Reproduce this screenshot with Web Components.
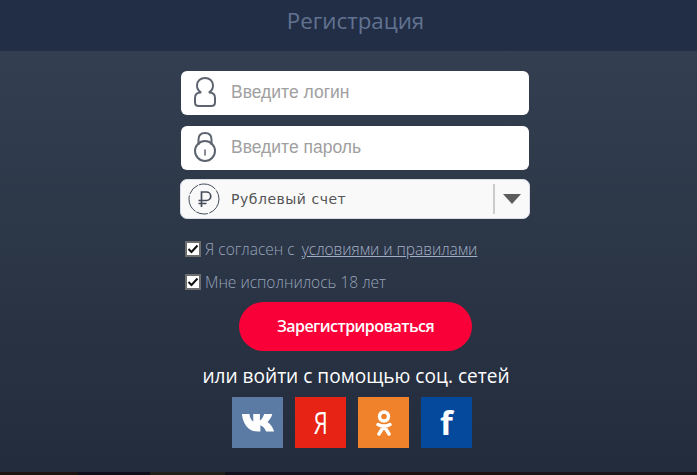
<!DOCTYPE html>
<html lang="ru">
<head>
<meta charset="utf-8">
<title>Регистрация</title>
<style>
  html, body { margin: 0; padding: 0; height: 100%; }
  body { background: #2a3446; font-family: "Open Sans", sans-serif; overflow: hidden; }
</style>
</head>
<body>
<reg-page>
  <reg-header slot="header">Регистрация</reg-header>
  <reg-field icon="user" placeholder="Введите логин"></reg-field>
  <reg-field icon="lock" placeholder="Введите пароль"></reg-field>
  <reg-select>Рублевый счет</reg-select>
  <reg-check first>Я согласен с <a>условиями и правилами</a></reg-check>
  <reg-check>Мне исполнилось 18 лет</reg-check>
  <reg-button>Зарегистрироваться</reg-button>
  <reg-social></reg-social>
</reg-page>

<script>
class RegPage extends HTMLElement {
    connectedCallback() {
        this.attachShadow({ mode: 'open' });
        this.shadowRoot.innerHTML = `
      <style>
        :host {
          display: flex;
          flex-direction: column;
          width: 697px;
          height: 475px;
          overflow: hidden;
        }
        .main {
          flex: 1;
          display: flex;
          flex-direction: column;
          padding: 20px 0 0 180px;
          background: linear-gradient(to bottom, #333f50 0, #232c3d 100%);
        }
        /* the photo behind the form peeks out along the bottom */
        .strip {
          height: 3px;
          background: linear-gradient(to right, #1d1412 0 78px, #0f0f1c 78px 150px, #22201a 150px 225px, #12121e 225px 370px, #1e1210 370px 520px, #1a1418 520px 697px);
        }
      </style>
      <slot name="header"></slot>
      <div class="main"><slot></slot></div>
      <div class="strip"></div>
    `;
    }
}

class RegHeader extends HTMLElement {
    connectedCallback() {
        this.attachShadow({ mode: 'open' });
        this.shadowRoot.innerHTML = `
      <style>
        :host {
          display: block;
          height: 51px;
          padding: 3px 0 0 14px;
          box-sizing: border-box;
          background: #222e46;
          color: #617391;
          font: 400 22.300px/36px "Open Sans", sans-serif;
          text-align: center;
        }
      </style>
      <slot></slot>
    `;
    }
}

const ICONS = {
    user: `<svg width="22" height="30" viewBox="0 0 22 30" fill="none" stroke="#5d6470" stroke-width="2">
        <path d="M7.200 15.500C4.500 14 3 11.500 3 8.500 3 4 6.500 1 11 1s8 3 8 7.500c0 3-1.500 5.500-4.200 7"/>
        <path d="M7.200 15.500H6.500C3 15.500 1 17.800 1 21v4.500C1 28 2.500 29 5 29h12c2.500 0 4-1 4-3.500V21c0-3.200-2-5.500-5.500-5.500h-.7"/>
      </svg>`,
    lock: `<svg width="22" height="30" viewBox="0 0 22 30" fill="none" stroke="#5d6470" stroke-width="2">
        <path d="M4.500 13V7.500C4.500 3.500 7 1 11 1s6.500 2.500 6.500 6.500V13"/>
        <circle cx="11" cy="19" r="10"/>
        <path d="M11 18v5" stroke-linecap="round" stroke-width="1.500"/>
      </svg>`
};

class RegField extends HTMLElement {
    connectedCallback() {
        const icon = ICONS[this.getAttribute('icon')];
        this.attachShadow({ mode: 'open' });
        this.shadowRoot.innerHTML = `
      <style>
        :host {
          display: flex;
          align-items: center;
          width: 348px;
          height: 44px;
          margin: 0 0 11px 1px;
          background: #fff;
          border-radius: 6px;
        }
        .ico {
          width: 47px;
          margin: -2px 3px 0 0;
          display: flex;
          justify-content: center;
        }
        span {
          color: #a0a0a0;
          font: 17.500px/20px "Liberation Sans", sans-serif;
          margin-top: -3px;
        }
      </style>
      <div class="ico">${icon}</div>
      <span>${this.getAttribute('placeholder')}</span>
    `;
    }
}

class RegSelect extends HTMLElement {
    connectedCallback() {
        this.attachShadow({ mode: 'open' });
        this.shadowRoot.innerHTML = `
      <style>
        :host {
          display: flex;
          align-items: center;
          width: 350px;
          height: 40px;
          margin: -2px 0 0 0;
          box-sizing: border-box;
          background: #f9f9fa;
          border: 1px solid #d9dde6;
          border-radius: 7px;
        }
        .rub {
          width: 46px;
          margin-right: 4px;
          display: flex;
          justify-content: center;
        }
        .txt {
          flex: 1;
          color: #555;
          font: 14px/18px "DejaVu Sans", sans-serif;
          letter-spacing: .52px;
        }
        .sep {
          width: 2px;
          height: 30px;
          background: #ccc;
        }
        .arrow {
          width: 34px;
          display: flex;
          justify-content: center;
        }
        .arrow i {
          width: 0;
          height: 0;
          border: 9px solid transparent;
          border-bottom: 0;
          border-top: 10px solid #5c5c5c;
        }
      </style>
      <div class="rub">
        <svg width="32" height="32" viewBox="0 0 32 32" fill="none" stroke="#454c5a">
          <circle cx="16" cy="16" r="15" stroke-dasharray="18 1.500 12 1"/>
          <path d="M13.500 24V9h5a4.200 4.200 0 0 1 0 8.500H10.500M10.500 20.500h8" stroke-width="1.700"/>
        </svg>
      </div>
      <div class="txt"><slot></slot></div>
      <div class="sep"></div>
      <div class="arrow"><i></i></div>
    `;
    }
}

class RegCheck extends HTMLElement {
    connectedCallback() {
        this.attachShadow({ mode: 'open' });
        this.shadowRoot.innerHTML = `
      <style>
        :host {
          display: flex;
          align-items: center;
          gap: 4px;
          height: 20px;
          margin: 13px 0 0 5px;
          color: #98a4ba;
          font: 300 15.500px/20px "Open Sans", sans-serif;
        }
        :host([first]) { margin-top: 20px; }
        .box {
          flex: none;
          width: 16px;
          height: 16px;
          box-sizing: border-box;
          background: #fff;
          border: 2px solid #6d6d6d;
          display: flex;
        }
        ::slotted(a) {
          color: #a3afc4;
          text-decoration: underline;
          margin-left: 3px;
          letter-spacing: -.05px;
        }
      </style>
      <div class="box">
        <svg width="12" height="12" viewBox="0 0 12 12" fill="none" stroke="#111" stroke-width="2">
          <path d="M1.500 6l3 3 6-6.500"/>
        </svg>
      </div>
      <div><slot></slot></div>
    `;
    }
}

class RegButton extends HTMLElement {
    connectedCallback() {
        this.attachShadow({ mode: 'open' });
        this.shadowRoot.innerHTML = `
      <style>
        :host {
          display: flex;
          align-items: center;
          justify-content: center;
          width: 233px;
          height: 47px;
          padding-bottom: 2px;
          margin: 10px 0 0 59px;
          border-radius: 25px;
          background: #fa0038;
          color: #fff;
          font: 600 16px/20px "Open Sans", sans-serif;
          letter-spacing: -.55px;
        }
      </style>
      <slot></slot>
    `;
    }
}

class RegSocial extends HTMLElement {
    connectedCallback() {
        this.attachShadow({ mode: 'open' });
        this.shadowRoot.innerHTML = `
      <style>
        :host {
          display: flex;
          flex-direction: column;
          align-items: center;
          width: 352px;
        }
        p {
          margin: 13px 0 0;
          color: #fff;
          font: 400 19.100px/24px "Open Sans", sans-serif;
          white-space: nowrap;
        }
        .row {
          display: flex;
          gap: 12px;
          margin: 9px 8px 0 0;
        }
        .s {
          width: 51px;
          height: 51px;
          display: flex;
          align-items: center;
          justify-content: center;
          color: #fff;
        }
        .ya {
          display: inline-block;
          font: 400 31px/1 "Open Sans", sans-serif;
          transform: scaleX(.72);
        }
        .fb {
          font: 700 33px/1 "Open Sans", sans-serif;
        }
      </style>
      <p>или войти с помощью соц. сетей</p>
      <div class="row">
        <div class="s" style="background:#5b7ba5">
          <svg width="34" height="19" viewBox="0 0 34 20" fill="#fff"><path d="M0 1h8c.5 4 2 7 4 8V1h7v7c2-1 3.500-4 4.500-7H32c-.8 3.500-3 6.500-5 8.500 2.500 1.500 5.500 5 7 10h-8.500c-1-3-3.500-5.500-6-6.500v6.500h-3C8 19.500 1.500 13 0 1z"/></svg>
        </div>
        <div class="s" style="background:#e62314"><span class="ya">Я</span></div>
        <div class="s" style="background:#f1822c">
          <svg width="16" height="26" viewBox="0 0 16 26" fill="none" stroke="#fff" stroke-width="3.400" stroke-linecap="round"><circle cx="8" cy="6.500" r="4.500"/><path d="M2 14.500c3.500 2 8.500 2 12 0M8 16l-5 8M8 16l5 8"/></svg>
        </div>
        <div class="s" style="background:#04499c"><span class="fb">f</span></div>
      </div>
    `;
    }
}

customElements.define('reg-page', RegPage);
customElements.define('reg-header', RegHeader);
customElements.define('reg-field', RegField);
customElements.define('reg-select', RegSelect);
customElements.define('reg-check', RegCheck);
customElements.define('reg-button', RegButton);
customElements.define('reg-social', RegSocial);
</script>
</body>
</html>
